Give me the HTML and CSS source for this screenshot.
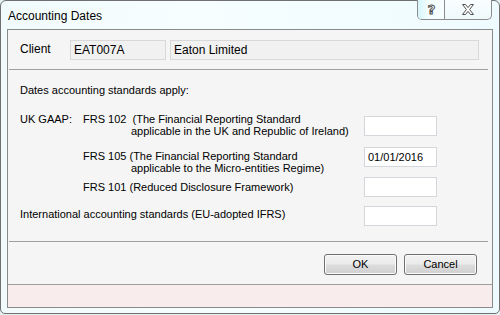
FILE: index.html
```html
<!DOCTYPE html>
<html>
<head>
<meta charset="utf-8">
<link rel="stylesheet" href="styles.css">
</head>
<body>
<div class="window">
  <div class="titlebar">
    <span class="title">Accounting Dates</span>
    <div class="captions">
      <div class="cbtn help"><span class="qmark">?</span></div>
      <div class="cbtn close">
        <svg width="12" height="11" viewBox="0 0 12 11"><polygon points="0.5,0.5 3.5,0.5 6,3.6 8.5,0.5 11.5,0.5 7.6,5.5 11.5,10.5 8.5,10.5 6,7.4 3.5,10.5 0.5,10.5 4.4,5.5" fill="#ffffff" stroke="#4f4f4f" stroke-width="1" stroke-linejoin="round"/></svg>
      </div>
    </div>
  </div>
  <div class="client">
    <div class="client-row">
      <span class="client-label">Client</span>
      <div class="ro code">EAT007A</div>
      <div class="ro name">Eaton Limited</div>
    </div>
    <div class="sep"></div>
    <div class="section">
      <div class="intro">Dates accounting standards apply:</div>
      <div class="row r1">
        <div class="lbl">UK GAAP:</div>
        <div class="std">
          <div>FRS 102&nbsp; (The Financial Reporting Standard</div>
          <div class="cont">applicable in the UK and Republic of Ireland)</div>
        </div>
        <div class="field"></div>
      </div>
      <div class="row r2">
        <div class="lbl"></div>
        <div class="std">
          <div>FRS 105 (The Financial Reporting Standard</div>
          <div class="cont">applicable to the Micro-entities Regime)</div>
        </div>
        <div class="field">01/01/2016</div>
      </div>
      <div class="row r3">
        <div class="lbl"></div>
        <div class="std">FRS 101 (Reduced Disclosure Framework)</div>
        <div class="field"></div>
      </div>
      <div class="row r4">
        <div class="std wide">International accounting standards (EU-adopted IFRS)</div>
        <div class="field"></div>
      </div>
    </div>
    <div class="sep"></div>
    <div class="buttons">
      <div class="btn">OK</div>
      <div class="btn">Cancel</div>
    </div>
    <div class="status"></div>
  </div>
</div>
</body>
</html>
```
FILE: styles.css
```css
html, body {
  margin: 0;
  padding: 0;
}
body {
  width: 500px;
  height: 315px;
  overflow: hidden;
  background: #e6f1f4;
  font-family: "Liberation Sans", Arial, sans-serif;
  color: #000;
}
.window {
  box-sizing: border-box;
  width: 500px;
  height: 314px;
  border: 1px solid #707070;
  border-radius: 6px 6px 5px 5px;
  background: linear-gradient(to right, #f2fbfc 0%, #f6feff 40%, #eefbfe 100%);
  padding: 0 6px 5px 6px;
  display: flex;
  flex-direction: column;
}
.titlebar {
  height: 28px;
  flex: none;
  display: flex;
  align-items: center;
}
.title {
  padding-left: 1px;
  font-size: 12px;
  color: #000;
  margin-top: 1px;
}
.captions {
  align-self: flex-start;
  margin-top: -1px;
  margin-left: auto;
  margin-right: 1px;
  height: 19px;
  display: flex;
  border: 1px solid #8c8c8c;
  border-top: 0;
  border-radius: 0 0 5px 5px;
  overflow: hidden;
  background: linear-gradient(#f9feff, #eef9fb);
}
.cbtn {
  height: 19px;
  display: flex;
  align-items: center;
  justify-content: center;
}
.help {
  width: 26px;
  border-right: 1px solid #8c8c8c;
  background: linear-gradient(to right, #d6f6fb 0%, #f3fdff 40%, #f7feff 100%);
}
.close {
  width: 46px;
}
.close svg {
  margin-top: -1px;
}
.qmark {
  font-family: "DejaVu Sans", sans-serif;
  font-weight: bold;
  font-size: 13px;
  color: #ffffff;
  -webkit-text-stroke: 1px #4a4a4a;
  margin-left: 1px;
  margin-top: -1px;
}
.client {
  box-sizing: border-box;
  height: 279px;
  flex: none;
  border: 1px solid #8a8a8a;
  background: #f5f5f5;
  display: flex;
  flex-direction: column;
}
.client-row {
  height: 39px;
  flex: none;
  box-sizing: border-box;
  padding: 10px 0 0 12px;
  display: flex;
  align-items: flex-start;
  font-size: 12px;
}
.client-label {
  width: 50px;
  line-height: 16px;
  margin-top: 1px;
}
.ro {
  box-sizing: border-box;
  height: 20px;
  border: 1px solid #d8d8d8;
  background: #f1f1f1;
  padding-left: 3px;
  line-height: 18px;
  white-space: nowrap;
}
.code {
  width: 96px;
  margin-right: 4px;
}
.name {
  width: 309px;
}
.sep {
  height: 0;
  flex: none;
  border-top: 1px solid #a0a0a0;
  margin: 0 4px 0 1px;
}
.section {
  height: 171px;
  flex: none;
  box-sizing: border-box;
  padding: 14px 0 0 12px;
  font-size: 11px;
  line-height: 12px;
}
.row {
  display: grid;
  grid-template-columns: 63px 281px 73px;
  align-items: start;
}
.lbl, .std {
  white-space: nowrap;
}
.wide {
  grid-column: 1 / 3;
}
.cont {
  padding-left: 48px;
}
.field {
  box-sizing: border-box;
  width: 73px;
  height: 20px;
  border: 1px solid #d3d6da;
  background: #ffffff;
  padding: 3px 0 0 3px;
  font-size: 11px;
  line-height: 12px;
}
.r1 { margin-top: 17px; }
.r1 .field { margin-top: 3px; }
.r2 { margin-top: 10px; }
.r2 .std { margin-top: 3px; }
.r3 { margin-top: 3px; }
.r3 .std { margin-top: 4px; }
.r4 { margin-top: 9px; }
.r4 .std { margin-top: 2px; }
.buttons {
  height: 42px;
  flex: none;
  box-sizing: border-box;
  padding: 12px 15px 0 0;
  display: flex;
  justify-content: flex-end;
  gap: 7px;
}
.btn {
  box-sizing: border-box;
  width: 73px;
  height: 21px;
  border: 1px solid #707070;
  border-radius: 3px;
  background: linear-gradient(#f2f2f2 0%, #ebebeb 48%, #dddddd 52%, #cfcfcf 100%);
  box-shadow: inset 0 0 0 1px #fbfbfb;
  font-size: 11px;
  line-height: 19px;
  text-align: center;
}
.status {
  flex: 1;
  border-top: 1px solid #9c9c9c;
  background: #f8ecec;
}
```
